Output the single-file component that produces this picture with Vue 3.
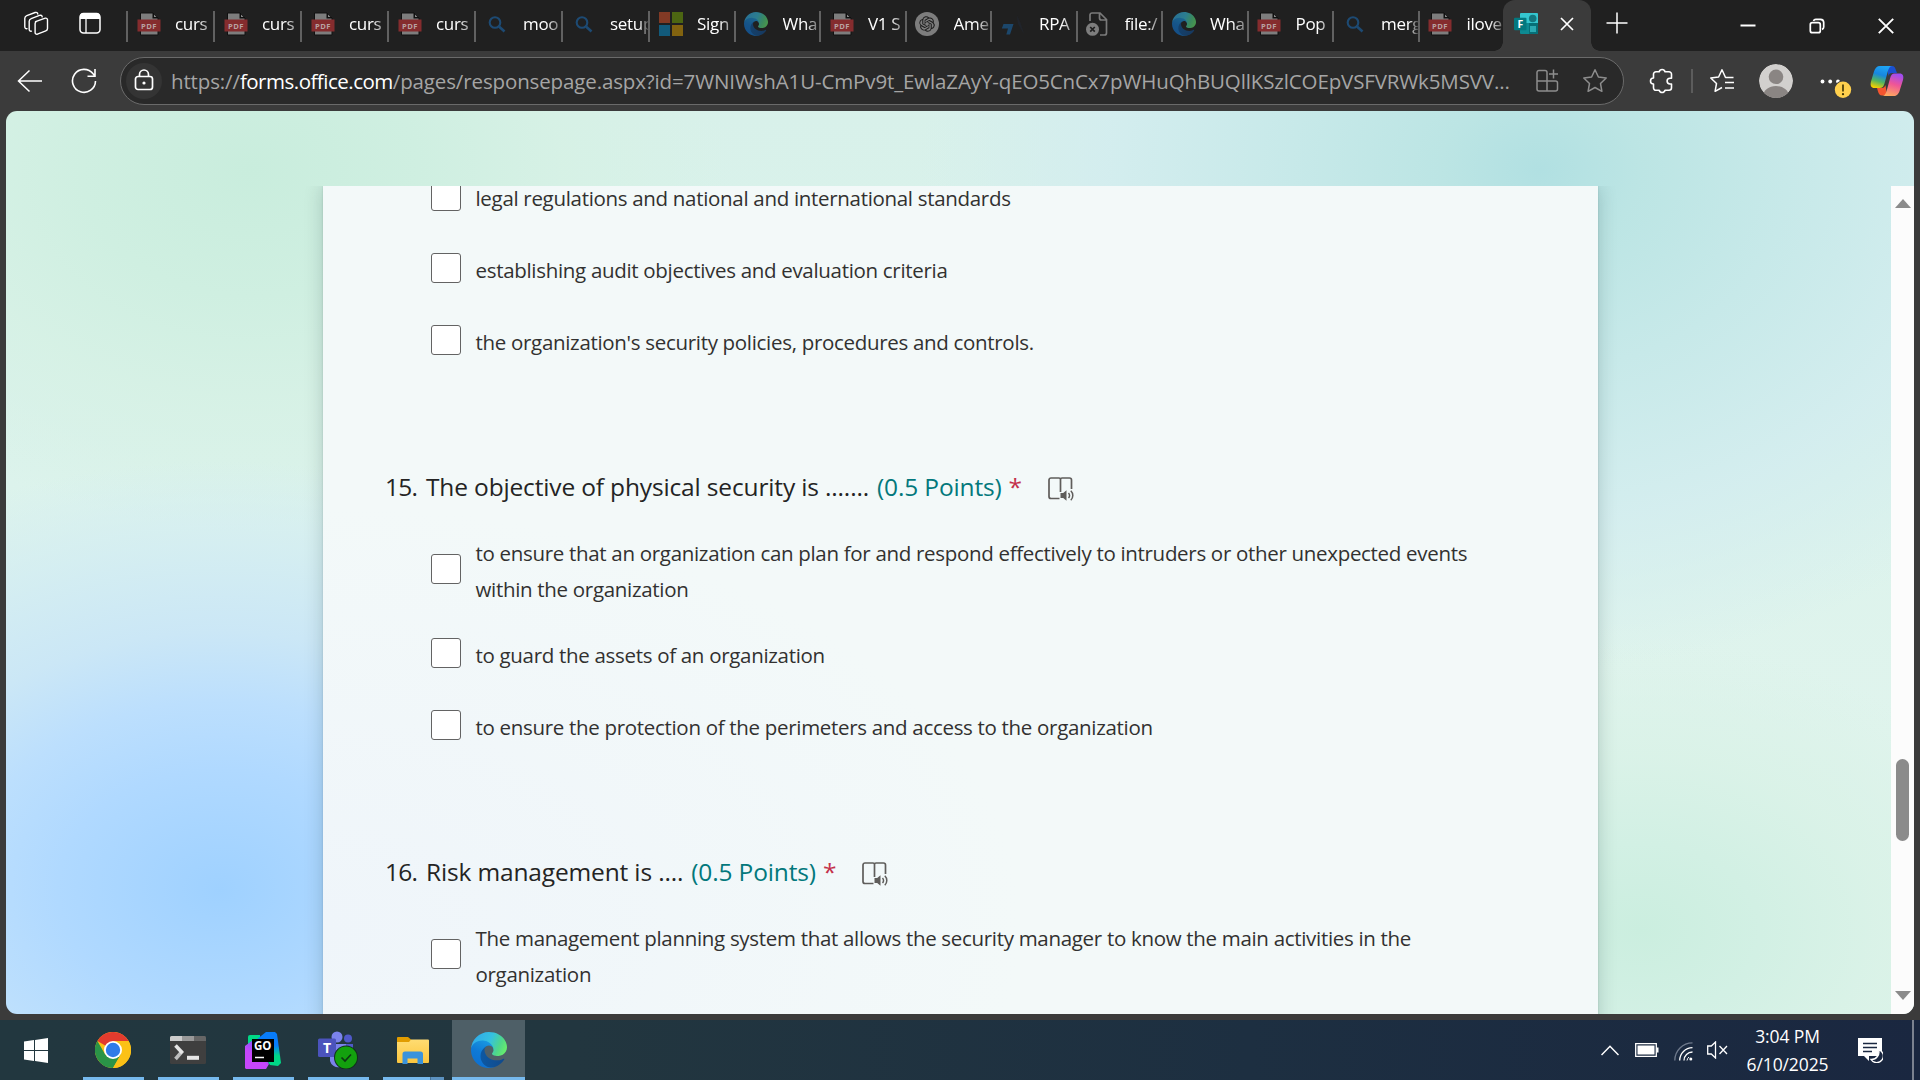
<script setup>
const tabs = [
  { icon: 'pdf', title: 'curs' },
  { icon: 'pdf', title: 'curs' },
  { icon: 'pdf', title: 'curs' },
  { icon: 'pdf', title: 'curs' },
  { icon: 'search', title: 'moo' },
  { icon: 'search', title: 'setup', fade: true },
  { icon: 'ms', title: 'Sign' },
  { icon: 'edge', title: 'Wha' },
  { icon: 'pdf', title: 'V1 S' },
  { icon: 'gpt', title: 'Ame' },
  { icon: 'rpa', title: 'RPA' },
  { icon: 'file', title: 'file:/' },
  { icon: 'edge', title: 'Wha' },
  { icon: 'pdf', title: 'Pop' },
  { icon: 'search', title: 'merg', fade: true },
  { icon: 'pdf', title: 'ilove' },
]

const previousOptions = [
  'legal regulations and national and international standards',
  'establishing audit objectives and evaluation criteria',
  "the organization's security policies, procedures and controls.",
]

const questions = [
  {
    number: '15.',
    title: 'The objective of physical security is .......',
    options: [
      'to ensure that an organization can plan for and respond effectively to intruders or other unexpected events within the organization',
      'to guard the assets of an organization',
      'to ensure the protection of the perimeters and access to the organization',
    ],
  },
  {
    number: '16.',
    title: 'Risk management is ....',
    options: [
      'The management planning system that allows the security manager to know the main activities in the organization',
    ],
  },
]
</script>

<template>
  <div class="screen">
    <svg class="defs" width="0" height="0" aria-hidden="true">
      <defs>
        <linearGradient id="edgeDark" x1="0" y1="0" x2="1" y2="0"><stop offset="0" stop-color="#0c59a4" /><stop offset="1" stop-color="#114a8b" /></linearGradient>
        <linearGradient id="edgeBlue" x1="0.7" y1="0" x2="0.3" y2="1"><stop offset="0" stop-color="#1b9de2" /><stop offset="0.5" stop-color="#0f7ad6" /><stop offset="1" stop-color="#0d6fd0" /></linearGradient>
        <linearGradient id="edgeTop" x1="0" y1="0.3" x2="1" y2="0.6"><stop offset="0" stop-color="#2fa9ea" /><stop offset="0.5" stop-color="#35c1e0" /><stop offset="0.8" stop-color="#4fd68a" /><stop offset="1" stop-color="#66eb6e" /></linearGradient>
        <symbol id="edge" viewBox="0 0 256 256">
          <path fill="url(#edgeDark)" d="M231 190.5c-3.4 1.8-6.9 3.4-10.5 4.7-11.5 4.3-23.6 6.5-35.9 6.5-47.3 0-88.5-32.5-88.5-74.3.1-11.4 6.4-21.9 16.4-27.3-42.8 1.8-53.8 46.4-53.8 72.5 0 73.9 68.1 81.4 82.8 81.4 7.9 0 19.8-2.3 27-4.6l1.3-.4c27.6-9.5 51-28.1 66.6-52.8 1.2-1.9.6-4.3-1.2-5.5-1.3-.8-2.9-.9-4.2-.2z" />
          <path fill="url(#edgeBlue)" d="M105.7 241.4c-8.9-5.5-16.6-12.8-22.7-21.3-26.3-36-18.4-86.5 17.6-112.8 3.8-2.7 7.7-5.2 11.9-7.2 3.1-1.5 8.4-4.1 15.5-4 10.1.1 19.6 4.9 25.7 13 4 5.4 6.3 11.9 6.4 18.7 0-.2 24.5-79.6-80-79.6-43.9 0-80 41.7-80 78.2-.2 19.3 4 38.5 12.1 56 27.6 58.8 94.8 87.6 156.4 67.1-21.1 6.6-44.1 3.7-62.9-8.1z" />
          <path fill="url(#edgeTop)" d="M152.3 148.9c-.8 1-3.3 2.5-3.3 5.7 0 2.6 1.7 5.1 4.7 7.2 14.4 10 41.5 8.7 41.6 8.7 10.7 0 21.1-2.9 30.3-8.3 18.8-11 30.4-31.1 30.4-52.9.3-22.4-8-37.3-11.3-43.9C223.5 23.9 177.7 0 128 0 58 0 1 56.2 0 126.2c.5-36.5 36.8-66 80-66 3.5 0 23.5.3 42 10.1 16.3 8.6 24.9 18.9 30.8 29.2 6.2 10.7 7.3 24.1 7.3 29.5s-2.7 13.3-7.8 19.9z" />
        </symbol>
      </defs>
    </svg>

    <header class="tabstrip">
      <div class="lead">
        <svg width="26" height="26" viewBox="0 0 26 26" fill="none" stroke="#fff" stroke-width="1.4" stroke-linejoin="round" stroke-linecap="round">
          <path d="M12.5 10.6 22.3 7.2a1.7 1.7 0 0 1 2.2 1.6v8.6a2.6 2.6 0 0 1-1.7 2.4l-8.4 3.4a1.7 1.7 0 0 1-2.3-1.6v-9a2.5 2.5 0 0 1 1.6-2.2z" />
          <path d="M8.4 20.1a1.7 1.7 0 0 1-2.2-1.6V10.2a3 3 0 0 1 2-2.6l8.3-3.2c1.5-.5 2.5.2 2.700 1.5" />
          <path d="M4 17.600a1.7 1.7 0 0 1-2.2-1.6V7.2a3 3 0 0 1 2-2.6l8.3-3.1c1.5-.5 2.500.2 2.700 1.5" />
        </svg>
        <svg width="24" height="24" viewBox="0 0 24 24"><rect x="2" y="2.5" width="20" height="19.5" rx="3.5" fill="none" stroke="#fff" stroke-width="1.5" /><path d="M2 8V5.5A3.5 3.5 0 0 1 5.5 2h13A3.5 3.5 0 0 1 22 5.5V8z" fill="#fff" /><path d="M8 8v14" stroke="#fff" stroke-width="1.3" /></svg>
      </div>

      <div v-for="(tab, i) in tabs" :key="i" class="tab" :class="{ wide: i < 6 }">
        <svg v-if="tab.icon === 'pdf'" class="fav" viewBox="0 0 24 24">
          <path d="M3.5 1H16l5 5v17H3.5z" fill="#7d7d7d" stroke="#101010" stroke-width="1" /><path d="M15.5.5l6 6h-6z" fill="#101010" /><path d="M17 2.500l2.500 2.500H17z" fill="#8b8b8b" />
          <rect x="0.5" y="7.5" width="23" height="12" fill="#852c2e" />
          <text x="12" y="16.700" text-anchor="middle" class="pdf-label">PDF</text>
        </svg>
        <svg v-else-if="tab.icon === 'search'" class="fav" viewBox="0 0 24 24" fill="none" stroke="#1d4a73"><circle cx="10" cy="10.5" r="5.3" stroke-width="2.1" /><path d="M14 14.5l5.500 5" stroke-width="2.6" /></svg>
        <svg v-else-if="tab.icon === 'ms'" class="fav" viewBox="0 0 24 24"><path d="M0 0h11v11H0z" fill="#813a25" /><path d="M13 0h11v11H13z" fill="#4c6612" /><path d="M0 13h11v11H0z" fill="#125a7b" /><path d="M13 13h11v11H13z" fill="#82630f" /></svg>
        <svg v-else-if="tab.icon === 'edge'" class="fav dim"><use href="#edge" /></svg>
        <svg v-else-if="tab.icon === 'gpt'" class="fav" viewBox="0 0 24 24"><circle cx="12" cy="12" r="12" fill="#7d7d7d" /><path transform="translate(4.2 4.2) scale(.65)" fill="#1c1c1c" d="M22.2819 9.8211a5.9847 5.9847 0 0 0-.5157-4.9108 6.0462 6.0462 0 0 0-6.5098-2.9A6.0651 6.0651 0 0 0 4.9807 4.1818a5.9847 5.9847 0 0 0-3.9977 2.9 6.0462 6.0462 0 0 0 .7427 7.0966 5.98 5.98 0 0 0 .511 4.9107 6.051 6.051 0 0 0 6.5146 2.9001A5.9847 5.9847 0 0 0 13.2599 24a6.0557 6.0557 0 0 0 5.7718-4.2058 5.9894 5.9894 0 0 0 3.9977-2.9001 6.0557 6.0557 0 0 0-.7475-7.073zm-9.022 12.6081a4.4755 4.4755 0 0 1-2.8764-1.0408l.1419-.0804 4.7783-2.7582a.7948.7948 0 0 0 .3927-.6813v-6.7369l2.02 1.1686a.071.071 0 0 1 .038.052v5.5826a4.504 4.504 0 0 1-4.4945 4.4944zm-9.6607-4.1254a4.4708 4.4708 0 0 1-.5346-3.0137l.142.0852 4.783 2.7582a.7712.7712 0 0 0 .7806 0l5.8428-3.3685v2.3324a.0804.0804 0 0 1-.0332.0615L9.74 19.9502a4.4992 4.4992 0 0 1-6.1408-1.6464zM2.3408 7.8956a4.485 4.485 0 0 1 2.3655-1.9728V11.6a.7664.7664 0 0 0 .3879.6765l5.8144 3.3543-2.0201 1.1685a.0757.0757 0 0 1-.071 0l-4.8303-2.7865A4.504 4.504 0 0 1 2.3408 7.872zm16.5963 3.8558L13.1038 8.364 15.1192 7.2a.0757.0757 0 0 1 .071 0l4.8303 2.7913a4.4944 4.4944 0 0 1-.6765 8.1042v-5.6772a.79.79 0 0 0-.407-.667zm2.0107-3.0231l-.142-.0852-4.7735-2.7818a.7759.7759 0 0 0-.7854 0L9.409 9.2297V6.8974a.0662.0662 0 0 1 .0284-.0615l4.8303-2.7866a4.4992 4.4992 0 0 1 6.6802 4.66zM8.3065 12.863l-2.02-1.1638a.0804.0804 0 0 1-.038-.0567V6.0742a4.4992 4.4992 0 0 1 7.3757-3.4537l-.142.0805L8.704 5.459a.7948.7948 0 0 0-.3927.6813zm1.0976-2.3654l2.602-1.4998 2.6069 1.4998v2.9994l-2.5974 1.4997-2.6067-1.4997Z" /></svg>
        <svg v-else-if="tab.icon === 'rpa'" class="fav" viewBox="0 0 24 24"><path d="M2.500 12H12.500l-3.500 10.500H5.300L7 16.500H.8z" fill="#1c476b" /><path d="M16 3.500l1 8.500 6 10-3.500-11z" fill="#20242b" /></svg>
        <svg v-else class="fav" viewBox="0 0 24 24"><path d="M4 9V3a2 2 0 0 1 2-2h8l6.500 6.500V21a2 2 0 0 1-2 2H14M13.5 1v5a2 2 0 0 0 2 2h5" fill="none" stroke="#7a7a7a" stroke-width="1.7" /><circle cx="6.5" cy="17.3" r="6.5" fill="#7d7d7d" /><path d="M4.2 15l4.600 4.600m0-4.600-4.600 4.600" stroke="#1f1f1f" stroke-width="1.7" /></svg>
        <span class="tab-title" :class="{ fade: tab.fade }">{{ tab.title }}</span>
      </div>

      <div class="tab-active">
        <svg width="24" height="24" viewBox="0 0 24 24">
          <path d="M6 2a1 1 0 0 1 1-1h16a1 1 0 0 1 1 1v9H6z" fill="#35c6cf" /><path d="M6 11h18v10a1 1 0 0 1-1 1H7a1 1 0 0 1-1-1z" fill="#0e8a92" /><path d="M15 11h9v10a1 1 0 0 1-1 1h-8z" fill="#067078" />
          <circle cx="18.7" cy="6.5" r="3.8" fill="#13777f" /><rect x="16" y="14" width="6" height="6" fill="#2ba9b2" /><rect x="0" y="5.7" width="12.5" height="12.5" rx="1" fill="#03787f" />
          <text x="6.3" y="15.7" text-anchor="middle" class="f-label">F</text>
        </svg>
        <svg width="14" height="14" viewBox="0 0 14 14" stroke="#fff" stroke-width="1.7"><path d="M1 1l12 12M13 1 1 13" /></svg>
      </div>
      <svg class="plus" width="22" height="22" viewBox="0 0 22 22" stroke="#fff" stroke-width="1.5"><path d="M11 .5v21M.5 11h21" /></svg>
      <div class="window-controls">
        <svg width="16" height="16" viewBox="0 0 16 16"><path d="M.5 7.500h15" stroke="#fff" stroke-width="2" /></svg>
        <svg width="16" height="16" viewBox="0 0 16 16" fill="none" stroke="#fff" stroke-width="1.7"><rect x="1.3" y="4.7" width="10" height="10" rx="2" /><path d="M4.500 3A2.500 2.500 0 0 1 7 1.300h4.500A3.300 3.300 0 0 1 14.700 4.600V9a2.500 2.500 0 0 1-1.700 2.400" /></svg>
        <svg width="16" height="16" viewBox="0 0 16 16" stroke="#fff" stroke-width="1.9"><path d="M.8.8l14.400 14.400M15.200.8L.8 15.200" /></svg>
      </div>
    </header>

    <nav class="toolbar">
      <svg class="back" width="26" height="24" viewBox="0 0 26 24" fill="none" stroke="#fff" stroke-width="1.5"><path d="M25 12H1.500M12.500 1.500 1.500 12l11 10.500" /></svg>
      <svg class="reload" width="26" height="26" viewBox="0 0 26 26" fill="none" stroke="#fff" stroke-width="1.6"><path d="M24.500 13a11.500 11.500 0 1 1-2.400-7.200L24 8M24 1v7.300h-7.500" /></svg>
      <div class="address">
        <div class="lock"><svg width="20" height="22" viewBox="0 0 20 22" fill="none" stroke="#fff" stroke-width="1.7"><rect x="1.5" y="7.5" width="17" height="13" rx="2.5" /><path d="M5.500 7.500V5.500a4.500 4.500 0 0 1 9 0v2" /><circle cx="10" cy="14" r="1.600" fill="#fff" stroke="none" /></svg></div>
        <span class="url">https://<b>forms.office.com</b>/pages/responsepage.aspx?id=7WNIWshA1U-CmPv9t_EwlaZAyY-qEO5CnCx7pWHuQhBUQllKSzlCOEpVSFVRWk5MSVV...</span>
        <svg class="apps" width="24" height="24" viewBox="0 0 24 24" fill="none" stroke="#8d8d8d" stroke-width="1.5"><path d="M12 12V3.500a2 2 0 0 0-2-2H4a2 2 0 0 0-2 2V20a2 2 0 0 0 2 2h16.500a2 2 0 0 0 2-2v-6a2 2 0 0 0-2-2zM2 12h10v10M18.500.5v9M14 5h9" /></svg>
        <svg class="star" width="26" height="26" viewBox="0 0 26 26" fill="none" stroke="#8d8d8d" stroke-width="1.5" stroke-linejoin="round"><path d="M13 1.800l3.400 7.200 7.800 1-5.700 5.500 1.400 7.800L13 19.500l-6.900 3.800 1.400-7.800L1.800 10l7.800-1z" /></svg>
      </div>
      <svg class="puzzle" width="24" height="26" viewBox="0 0 24 26" fill="none" stroke="#fff" stroke-width="1.6" stroke-linejoin="round"><path d="M10.200 3.800a3 3 0 0 1 5.800 0H20a2.500 2.500 0 0 1 2.500 2.500v3.900h-1.500a2.900 2.900 0 0 0 0 5.800h1.500v3.800a2.500 2.500 0 0 1-2.500 2.500h-4a3 3 0 0 1-5.800 0H7a2.500 2.500 0 0 1-2.500-2.500V16a3 3 0 0 1 0-6V6.300A2.500 2.500 0 0 1 7 3.800z" /></svg>
      <i class="divider"></i>
      <svg class="favs" width="26" height="26" viewBox="0 0 26 26" fill="none" stroke="#fff" stroke-width="1.5" stroke-linejoin="round"><path d="M24.500 9.500h-8L13 1.800 9.600 9 1.800 10l5.700 5.500-1.400 7.800L13 19.500M16 14.500h9M16 20h9" /></svg>
      <svg class="avatar" width="34" height="34" viewBox="0 0 34 34"><defs><clipPath id="av"><circle cx="17" cy="17" r="17" /></clipPath></defs><g clip-path="url(#av)"><circle cx="17" cy="17" r="17" fill="#d2d0ce" /><circle cx="17" cy="12.8" r="7.3" fill="#8a8583" /><ellipse cx="17" cy="32.5" rx="13" ry="10.5" fill="#8a8583" /></g></svg>
      <svg class="more" width="34" height="34" viewBox="0 0 34 34"><g fill="#fff"><circle cx="4.500" cy="17.500" r="1.9" /><circle cx="12.2" cy="17.500" r="1.9" /><circle cx="20" cy="17.500" r="1.9" /></g><circle cx="25" cy="25.700" r="9.2" fill="#3b3b3b" /><circle cx="25" cy="25.700" r="8.2" fill="#ffd04d" /><path d="M25 20.500v7" stroke="#3b3000" stroke-width="1.6" /><circle cx="25" cy="30.200" r="1.1" fill="#3b3000" /></svg>
      <svg class="copilot" width="34" height="32" viewBox="0 0 34 32">
        <defs>
          <linearGradient id="cpA" x1="0.6" y1="0" x2="0.3" y2="1"><stop offset="0" stop-color="#1fa5f5" /><stop offset="0.4" stop-color="#1787e0" /><stop offset="0.7" stop-color="#52b560" /><stop offset="1" stop-color="#f5d000" /></linearGradient>
          <linearGradient id="cpB" x1="0.6" y1="0" x2="0.3" y2="1"><stop offset="0" stop-color="#a04cf0" /><stop offset="0.45" stop-color="#ef5597" /><stop offset="1" stop-color="#ffab5e" /></linearGradient>
        </defs>
        <path d="M17 1h5c2.500 0 3.300 2 4 4.500L27 8h-5c-2 0-3 1-3.500 3z" fill="#1a50d0" />
        <path d="M17 30.500h-5c-2.500 0-3.300-2-4-4L7 23h5c2 0 3-1.500 3.500-3z" fill="#f4552f" />
        <path d="M10 1h12c-2.500 0-3.500 3-4.500 6.500l-3 11C13.500 21.500 12.500 23 9.500 23H4.500C1 23 0 20.500 1 16.500L4 6.500C5 3 7 1 10 1z" fill="url(#cpA)" />
        <path d="M24.500 8.500h5c3.500 0 4.500 2.500 3.500 6.500l-3 9.500c-1 4-3 6.500-6 6.500H12.500c2.500 0 3.500-3 4.500-6.500l3-11c1-3.500 2-5 4.500-5z" fill="url(#cpB)" />
      </svg>
    </nav>

    <main class="viewport">
      <div class="scroller">
        <section class="paper">
          <ul class="options first">
            <li v-for="o in previousOptions" :key="o"><i class="box"></i><span class="opt">{{ o }}</span></li>
          </ul>
          <article v-for="q in questions" :key="q.number">
            <h2>
              <span class="num">{{ q.number }}</span><span>{{ q.title }}</span><span class="points">(0.5 Points)</span><span class="req">*</span>
              <svg class="reader" width="27" height="25" viewBox="0 0 27 25" fill="none" stroke="#5f5d5b" stroke-width="1.7">
                <path d="M11.500 21.500H3a2 2 0 0 1-2-2V3a2 2 0 0 1 2-2h8a1.500 1.500 0 0 1 1.500 1.500V15M12.500 2.500A1.500 1.500 0 0 1 14 1h7.500a2 2 0 0 1 2 2v9" />
                <path d="M18.500 13.200v10.600L15.200 21h-2.700v-5h2.700z" fill="#5f5d5b" stroke="none" /><path d="M20.500 16a3.500 3.500 0 0 1 0 5M22.800 13.800a6.500 6.500 0 0 1 0 9.400" stroke-width="1.5" />
              </svg>
            </h2>
            <ul class="options">
              <li v-for="o in q.options" :key="o"><i class="box"></i><span class="opt">{{ o }}</span></li>
            </ul>
          </article>
        </section>
        <aside class="scrollbar">
          <svg width="16" height="9" viewBox="0 0 16 9"><path d="M8 0l8 9H0z" fill="#8b8b8b" /></svg>
          <i class="thumb"></i>
          <svg width="16" height="9" viewBox="0 0 16 9"><path d="M8 9l8-9H0z" fill="#8b8b8b" /></svg>
        </aside>
      </div>
    </main>

    <footer class="taskbar">
      <div class="task start"><svg width="24" height="25" viewBox="0 0 24 25" fill="#fff"><path d="M0 3.500 10 2v10H0zM11 1.900 24 0v12H11zM0 13h10v10L0 21.500zM11 13h13v12l-13-1.900z" /></svg></div>
      <div class="task">
        <svg width="36" height="36" viewBox="0 0 36 36"><circle cx="18" cy="18" r="18" fill="#fbc116" /><path d="M18 18 2.400 9A18 18 0 0 1 33.600 9z" fill="#e33b2e" /><path d="M10.200 22.500 2.400 9A18 18 0 0 0 18 36l7.800-13.500z" fill="#2a9447" /><path d="M18 9h15.600A18 18 0 0 1 18 36l7.800-13.500z" fill="#fbc116" /><circle cx="18" cy="18" r="9" fill="#fff" /><circle cx="18" cy="18" r="7.200" fill="#2f7be8" /></svg>
      </div>
      <div class="task">
        <svg width="36" height="28" viewBox="0 0 36 28"><rect width="36" height="28" rx="1.500" fill="#3f3f3f" /><path d="M0 5V1.500A1.500 1.500 0 0 1 1.500 0H12v5z" fill="#ccc" /><path d="M12 0h12v5H12z" fill="#999" /><path d="M24 0h10.500A1.500 1.500 0 0 1 36 1.500V5H24z" fill="#666" /><path d="M12.500 15 5.500 23" stroke="#bdbdbd" stroke-width="3.600" /><path d="M5.500 9.500 12.500 17" stroke="#e6e6e6" stroke-width="3.600" /><path d="M17 19.800h12v4H17z" fill="#e6e6e6" /></svg>
      </div>
      <div class="task">
        <svg width="36" height="37" viewBox="0 0 36 37"><defs><linearGradient id="goA" x1="0" y1="0" x2="0" y2="1"><stop offset="0.4" stop-color="#087cfa" /><stop offset="0.7" stop-color="#00d886" /></linearGradient><linearGradient id="goB" x1="0" y1="1" x2="0.6" y2="0"><stop offset="0.5" stop-color="#c646fb" /><stop offset="1" stop-color="#6a5cff" /></linearGradient></defs><path d="M3 5a2 2 0 0 1 2-2h10v10H3z" fill="#00d886" /><path d="M21 0h9l2 2 4 29-3 3-8-1-14-20V8z" fill="url(#goA)" /><path d="M0 14l8-6 16 24-3 5H1l-1-1z" fill="url(#goB)" /><path d="M7 7h22v23H7z" fill="#000" /><text x="17.8" y="18.300" text-anchor="middle" class="go-label">GO</text><path d="M10 25.500h9" stroke="#fff" stroke-width="1.5" /></svg>
      </div>
      <div class="task">
        <svg width="40" height="38" viewBox="0 0 40 38"><circle cx="19" cy="6" r="5.500" fill="#7b83eb" /><circle cx="30" cy="7.500" r="4" fill="#5059c9" /><path d="M25 13h10v12H25z" fill="#5059c9" /><path d="M12 13h16v13a8 8 0 0 1-16 4z" fill="#7b83eb" /><rect x="0" y="7.500" width="18" height="18.500" rx="1.500" fill="#4b53bc" /><text x="9" y="22" text-anchor="middle" class="t-label">T</text><circle cx="28" cy="26.500" r="12" fill="#12301c" /><circle cx="28" cy="26.500" r="11" fill="#13a10e" /><path d="M23.500 26.500l3.500 3.500 6-6.500" fill="none" stroke="#0c3a12" stroke-width="1.7" /></svg>
      </div>
      <div class="task stacked">
        <svg width="32" height="27" viewBox="0 0 32 27"><defs><linearGradient id="fo" x1="0" y1="0" x2="0" y2="1"><stop offset="0" stop-color="#ffdc72" /><stop offset="1" stop-color="#fcc63e" /></linearGradient></defs><path d="M0 1a1 1 0 0 1 1-1h10l3 2.500v3H0z" fill="#e19c00" /><path d="M0 5h12l2-2.500h17a1 1 0 0 1 1 1V25a1 1 0 0 1-1 1H1a1 1 0 0 1-1-1z" fill="url(#fo)" /><path d="M5.500 27V17A2.500 2.500 0 0 1 8 14.500h15.500A2.500 2.500 0 0 1 26 17v10h-5.500v-5.500h-10V27z" fill="#3a93dc" /></svg>
      </div>
      <div class="task current"><svg width="36" height="36"><use href="#edge" /></svg></div>

      <div class="tray">
        <svg width="18" height="11" viewBox="0 0 18 11" fill="none" stroke="#fff" stroke-width="1.5"><path d="M.5 10 9 1.300l8.500 8.700" /></svg>
        <svg class="bat" width="24" height="14" viewBox="0 0 24 14"><path d="M.7.7h20.600v12.600H.7z" fill="none" stroke="#fff" stroke-width="1.3" /><path d="M2.500 2.500h17v9h-17z" fill="#fff" /><path d="M22 4.500h1.500v5H22z" fill="#fff" /></svg>
        <svg class="wifi" width="19" height="19" viewBox="0 0 19 19" fill="none"><path d="M.8 18.500A17.700 17.700 0 0 1 18.500.8" stroke="#6f7a8c" stroke-width="1.3" /><path d="M5.700 18.500A12.800 12.800 0 0 1 18.500 5.700M10 18.500a8.500 8.500 0 0 1 8.500-8.500" stroke="#fff" stroke-width="1.3" /><path d="M13 18.500a5.500 5.500 0 0 1 2-3.500" stroke="#fff" stroke-width="1" /><circle cx="16.8" cy="17" r="1.500" fill="#fff" /></svg>
        <svg class="vol" width="21" height="18" viewBox="0 0 21 18" fill="none" stroke="#fff" stroke-width="1.3"><path d="M8.500 1v16L4.300 13H.7V5h3.600zM12.500 5l7.500 8M20 5l-7.500 8" /></svg>
        <div class="clock"><span>3:04 PM</span><span>6/10/2025</span></div>
        <svg class="notif" width="25" height="25" viewBox="0 0 25 25"><path d="M0 0h24v18H11v5l-5-5H0z" fill="#fff" /><path d="M5 5.500h14M5 9.500h14M5 13.500h9" stroke="#1b2841" stroke-width="1.4" /><path d="M20.500 11.500a7.500 7.500 0 0 1-7.500 10 6.700 6.700 0 1 0 7.500-10z" fill="#1b2841" stroke="#fff" stroke-width="1.3" /></svg>
        <i class="show-desktop"></i>
      </div>
    </footer>
  </div>
</template>

<style>
body {
  margin: 0;
  background: #3b3b3b;
}
</style>

<style scoped>
.screen {
  width: 1920px;
  height: 1080px;
  display: flex;
  flex-direction: column;
  overflow: hidden;
  background: #3b3b3b;
  font-family: 'Open Sans', 'Noto Sans', sans-serif;
}
.defs {
  position: absolute;
}
svg {
  flex: none;
  display: block;
}

.tabstrip {
  height: 51px;
  flex: none;
  display: flex;
  background: #202020;
}
.lead {
  width: 126px;
  flex: none;
  box-sizing: border-box;
  padding: 11px 0 0 23px;
  display: flex;
  gap: 29px;
}
.tab {
  width: 85.5px;
  flex: none;
  box-sizing: border-box;
  display: flex;
  align-items: flex-start;
  padding: 12px 0 0 10.5px;
  overflow: hidden;
  background: linear-gradient(#616161, #616161) 0 11px / 2px 31px no-repeat;
}
.tab.wide {
  width: 87px;
}
.fav {
  width: 24px;
  height: 24px;
}
.dim {
  opacity: 0.58;
}
.pdf-label {
  font: 700 7.6px 'Open Sans', sans-serif;
  fill: #b9a3a3;
  letter-spacing: 0.4px;
}
.tab-title {
  flex: 1;
  margin-left: 14.5px;
  overflow: hidden;
  white-space: nowrap;
  font-size: 17px;
  line-height: 24px;
  letter-spacing: -0.3px;
  color: #fff;
  -webkit-mask-image: linear-gradient(90deg, #000 60%, rgba(0, 0, 0, 0.3));
  mask-image: linear-gradient(90deg, #000 60%, rgba(0, 0, 0, 0.3));
}
.tab-title.fade {
  -webkit-mask-image: linear-gradient(90deg, #000 75%, rgba(0, 0, 0, 0.2));
  mask-image: linear-gradient(90deg, #000 75%, rgba(0, 0, 0, 0.2));
}
.tab-active {
  width: 88px;
  flex: none;
  box-sizing: border-box;
  display: flex;
  align-items: center;
  gap: 21.5px;
  padding: 0 0 3px 11px;
  position: relative;
  border-radius: 12px 12px 0 0;
  background: #3b3b3b;
}
.tab-active::before,
.tab-active::after {
  content: '';
  position: absolute;
  bottom: 0;
  width: 9px;
  height: 9px;
}
.tab-active::before {
  left: -9px;
  background: radial-gradient(circle at 0 0, transparent 8.5px, #3b3b3b 9px);
}
.tab-active::after {
  right: -9px;
  background: radial-gradient(circle at 100% 0, transparent 8.5px, #3b3b3b 9px);
}
.f-label {
  font: 700 10.5px 'Open Sans', sans-serif;
  fill: #fff;
}
.plus {
  margin: 12px 0 0 14.5px;
}
.window-controls {
  margin: 17.5px 26.5px 0 auto;
  display: flex;
  gap: 53px;
}

.toolbar {
  height: 60px;
  flex: none;
  display: flex;
  align-items: center;
}
.back {
  margin-left: 17px;
}
.reload {
  margin-left: 28px;
}
.address {
  width: 1504px;
  height: 48px;
  flex: none;
  box-sizing: border-box;
  margin-left: 23px;
  display: flex;
  align-items: center;
  padding-left: 5px;
  border: 1px solid #6a6a6a;
  border-radius: 24px;
  background: #292929;
}
.lock {
  width: 36px;
  height: 36px;
  display: grid;
  place-items: center;
  border-radius: 50%;
  background: #343434;
}
.lock svg {
  margin-top: -3px;
}
.url {
  width: 1356px;
  flex: none;
  margin-left: 9px;
  white-space: nowrap;
  font-size: 20.5px;
  letter-spacing: -0.13px;
  color: #a5a5a5;
}
.url b {
  font-weight: 400;
  letter-spacing: -0.5px;
  color: #fff;
}
.apps {
  margin-left: 8px;
}
.star {
  margin-left: 23px;
}
.puzzle {
  margin-left: 25px;
}
.divider {
  width: 2px;
  height: 24px;
  margin-left: 18px;
  background: #5c5c5c;
}
.favs {
  margin-left: 16px;
}
.avatar {
  margin-left: 24px;
}
.more {
  margin-left: 25px;
}
.copilot {
  margin-left: 18px;
}

.viewport {
  height: 903px;
  flex: none;
  box-sizing: border-box;
  margin: 0 6px;
  padding-top: 75px;
  border-radius: 11px;
  overflow: hidden;
  background:
    radial-gradient(ellipse 580px 430px at 214px 779px, #9fd1ff 0%, #b0d9ff 28%, #bcdffd 44%, #cbe7f6 60%, rgba(211, 237, 242, 0.85) 80%, rgba(218, 241, 239, 0) 100%),
    radial-gradient(ellipse 480px 360px at 244px 59px, #c9eddd 0%, #cfefe1 35%, rgba(214, 241, 229, 0.9) 65%, rgba(220, 243, 236, 0) 100%),
    radial-gradient(ellipse 620px 500px at 1534px 59px, #b1e0e2 0%, #bce5e4 16%, #c7e9e9 40%, rgba(211, 237, 239, 0.9) 70%, rgba(222, 243, 240, 0) 100%),
    radial-gradient(ellipse 400px 290px at 1634px 819px, #cbeedf 0%, #d2f0e4 30%, rgba(217, 242, 231, 0.85) 60%, rgba(224, 244, 237, 0) 100%),
    linear-gradient(#d8f1ea, #dcf3ec 40%, #e0f4ed 70%, #def4ea);
}
.scroller {
  height: 828px;
  display: flex;
  overflow: hidden;
}
.paper {
  width: 1275px;
  height: 1100px;
  flex: none;
  box-sizing: border-box;
  margin-left: 317px;
  padding: 0 78px 0 62px;
  background:
    radial-gradient(ellipse 700px 420px at 0 740px, #eff5fa, rgba(243, 249, 249, 0)),
    #f3f9f9;
  box-shadow: 0 0 18px rgba(0, 40, 40, 0.2), 0 0 2px rgba(0, 40, 40, 0.14);
}
.options {
  margin: 0 0 0 46px;
  padding: 0;
  list-style: none;
}
.options.first {
  margin-top: -26px;
}
.options li {
  min-height: 72px;
  box-sizing: border-box;
  padding: 12px 0;
  display: flex;
  align-items: center;
}
.box {
  width: 30px;
  height: 30px;
  flex: none;
  box-sizing: border-box;
  border: 1.5px solid #636363;
  border-radius: 3px;
  background: #fff;
}
.opt {
  width: 1020px;
  margin: 2px 0 -2px 14.5px;
  font-size: 20.5px;
  line-height: 36px;
  letter-spacing: -0.31px;
  color: #323130;
}
h2 {
  height: 36px;
  margin: 0;
  padding: 93px 0 16px;
  display: flex;
  align-items: center;
  font-size: 24.5px;
  line-height: 36px;
  font-weight: 400;
  letter-spacing: -0.15px;
  color: #242424;
}
.num {
  width: 41px;
  letter-spacing: -0.8px;
}
.points {
  margin-left: 8px;
  color: #03787c;
}
.req {
  margin-left: 7px;
  color: #c4314b;
}
.reader {
  margin: 4px 0 0 26px;
}
.scrollbar {
  width: 23px;
  margin-left: auto;
  box-sizing: border-box;
  padding: 13px 0 14px;
  display: flex;
  flex-direction: column;
  align-items: center;
  background: #fcfcfc;
}
.thumb {
  width: 13px;
  height: 82px;
  margin: 551px 0 auto;
  border-radius: 7px;
  background: #8b8b8b;
}

.taskbar {
  height: 60px;
  margin-top: 6px;
  flex: none;
  display: flex;
  background: linear-gradient(90deg, #22373f, #22363f 30%, #1d2f41 65%, #1a2740);
}
.task {
  width: 61px;
  margin-right: 14px;
  flex: none;
  display: grid;
  place-items: center;
  background: linear-gradient(#76b9ed, #76b9ed) 0 100% / 100% 3px no-repeat;
}
.task svg {
  margin-right: 2px;
}
.task.start {
  width: 72px;
  margin-right: 11px;
  background: none;
}
.task.start svg,
.task.current svg {
  margin-right: 0;
}
.task.stacked {
  margin-right: 8px;
  background: linear-gradient(90deg, #76b9ed 47px, #3c6284 47px, #5c92c0 48.5px) 0 100% / 100% 3px no-repeat;
}
.task.current {
  width: 73px;
  margin: 0;
  background: linear-gradient(#76b9ed, #76b9ed) 0 100% / 100% 3px no-repeat #4e5f67;
}
.go-label {
  font: 700 11.5px 'Open Sans', sans-serif;
  fill: #fff;
}
.t-label {
  font: 700 14px 'Open Sans', sans-serif;
  fill: #fff;
}
.tray {
  margin-left: auto;
  display: flex;
  align-items: center;
}
.bat {
  margin-left: 16px;
}
.wifi {
  margin: 2px 0 0 15px;
}
.vol {
  margin-left: 14px;
}
.clock {
  width: 100px;
  margin-left: 9.5px;
  display: flex;
  flex-direction: column;
  align-items: center;
  font-size: 17.5px;
  line-height: 28px;
  letter-spacing: -0.1px;
  color: #fff;
}
.notif {
  margin-left: 20.5px;
}
.show-desktop {
  width: 2px;
  height: 60px;
  margin: 0 6px 0 29px;
  background: #7b8290;
}
</style>
